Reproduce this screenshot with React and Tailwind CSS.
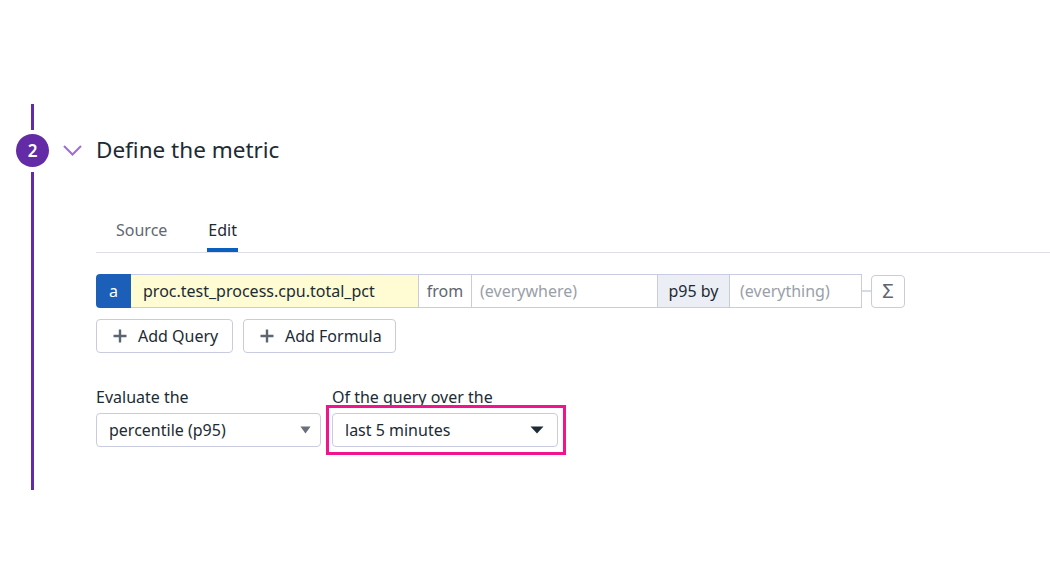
import { useState } from "react";

const PURPLE = "bg-[#632ca6]";

const PlusIcon = () => (
  <svg width="16" height="16" viewBox="0 0 16 16" className="text-[#5f6570]">
    <path d="M8 1.5v13M1.5 8h13" stroke="currentColor" strokeWidth="2.4" />
  </svg>
);

const Caret = ({ className, w = 14 }) => (
  <svg width={w} height="8" viewBox="0 0 14 8" preserveAspectRatio="none" className={className}>
    <path d="M0.5 0.5h13L7 7.5z" fill="currentColor" />
  </svg>
);

const SelectBox = ({ value, caretClass, caretW, width, pr }) => (
  <div
    className={`${width} ${pr} h-[34px] flex items-center justify-between pl-3 border border-[#c9cce0] rounded bg-white text-[16px] text-[#1c2b34]`}
  >
    <span>{value}</span>
    <Caret className={caretClass} w={caretW} />
  </div>
);

const App = () => {
  const [tab, setTab] = useState("Edit");

  return (
    <div
      className="w-[1050px] h-[582px] bg-white overflow-hidden pt-[104px] pl-4"
      style={{ fontFamily: '"Noto Sans", "Open Sans", sans-serif' }}
    >
      <div className="flex">
        {/* step rail */}
        <div className="w-[33px] flex flex-col items-center">
          <div className={`w-[3px] h-[26px] ${PURPLE}`}></div>
          <div
            className={`mt-[4px] w-[33px] h-[33px] rounded-full ${PURPLE} flex items-center justify-center text-white text-[17px] font-semibold`}
          >
            2
          </div>
          <div className={`mt-[5px] w-[3px] flex-1 ${PURPLE}`}></div>
        </div>

        <div className="flex-1 pl-[14px]">
          {/* header */}
          <div className="mt-[30px] h-[33px] flex items-center">
            <svg width="19" height="11" viewBox="0 0 19 11" className="text-[#9b6fd3]">
              <path d="M1 1l8.5 8.5L18 1" fill="none" stroke="currentColor" strokeWidth="2" />
            </svg>
            <h2 className="ml-[14px] -mt-[1px] text-[22.5px] text-[#1c2b34] leading-none">
              Define the metric
            </h2>
          </div>

          {/* content */}
          <div className="ml-[33px] pb-[43px]">
            <div className="mt-[51px] flex gap-10 pl-5 border-b border-[#dcdde8]">
              {["Source", "Edit"].map((t) => (
                <button
                  key={t}
                  onClick={() => setTab(t)}
                  className={`text-[16px] leading-6 pb-[6px] border-b-4 ${
                    tab === t
                      ? "border-[#0b5fbd] text-[#1c2b34] px-[1px]"
                      : "border-transparent text-[#5f6874]"
                  }`}
                >
                  {t}
                </button>
              ))}
            </div>

            {/* query row */}
            <div className="mt-[21px] flex items-center h-[34px] text-[16px]">
              <div className="w-[35px] h-full bg-[#1c5fb8] rounded-l text-white flex items-center justify-center">
                a
              </div>
              <div className="w-[288px] h-full bg-[#fffbd2] border-y border-r border-[#c9cce0] flex items-center pl-3 text-[#1c2b34]">
                proc.test_process.cpu.total_pct
              </div>
              <div className="w-[53px] h-full border-y border-r border-[#c9cce0] flex items-center justify-center text-[#5f6570]">
                from
              </div>
              <div className="w-[186px] h-full border-y border-r border-[#c9cce0] flex items-center pl-2 text-[#9aa0a8]">
                (everywhere)
              </div>
              <div className="w-[72px] h-full bg-[#eceef5] border-y border-r border-[#c9cce0] flex items-center justify-center text-[#1c2b34]">
                p95 by
              </div>
              <div className="w-[132px] h-full border-y border-r border-[#c9cce0] flex items-center pl-[10px] text-[#9aa0a8]">
                (everything)
              </div>
              <div className="w-[9px] h-[2px] bg-[#d6d9e6]"></div>
              <div className="w-[34px] h-[33px] border border-[#c9cce0] rounded flex items-center justify-center text-[#5f6570] text-[20px]">
                Σ
              </div>
            </div>

            {/* add buttons */}
            <div className="mt-[11px] flex gap-[10px]">
              <button className="w-[137px] h-[34px] flex items-center gap-[10px] pl-[15px] border border-[#c9cce0] rounded text-[16px] text-[#1c2b34]">
                <PlusIcon />
                Add Query
              </button>
              <button className="w-[153px] h-[34px] flex items-center gap-[10px] pl-[15px] border border-[#c9cce0] rounded text-[16px] text-[#1c2b34]">
                <PlusIcon />
                Add Formula
              </button>
            </div>

            {/* evaluation */}
            <div className="mt-[34px] flex gap-[11px]">
              <div className="flex flex-col gap-[6px]">
                <label className="text-[16px] leading-5 text-[#1c2b34]">Evaluate the</label>
                <SelectBox
                  value="percentile (p95)"
                  width="w-[225px]"
                  pr="pr-[9px]"
                  caretW={11}
                  caretClass="text-[#6b6f7a]"
                />
              </div>
              <div className="flex flex-col gap-[6px]">
                <label className="text-[16px] leading-5 text-[#1c2b34]">Of the query over the</label>
                <div className="relative">
                  <SelectBox
                    value="last 5 minutes"
                    width="w-[226px]"
                    pr="pr-[13px]"
                    caretW={14}
                    caretClass="text-[#1c2b34]"
                  />
                  <div className="absolute -left-[6px] -right-[8px] -top-[8px] -bottom-[8px] border-[3px] border-[#f0158c] pointer-events-none"></div>
                </div>
              </div>
            </div>
          </div>
        </div>
      </div>
    </div>
  );
};

export default App;
